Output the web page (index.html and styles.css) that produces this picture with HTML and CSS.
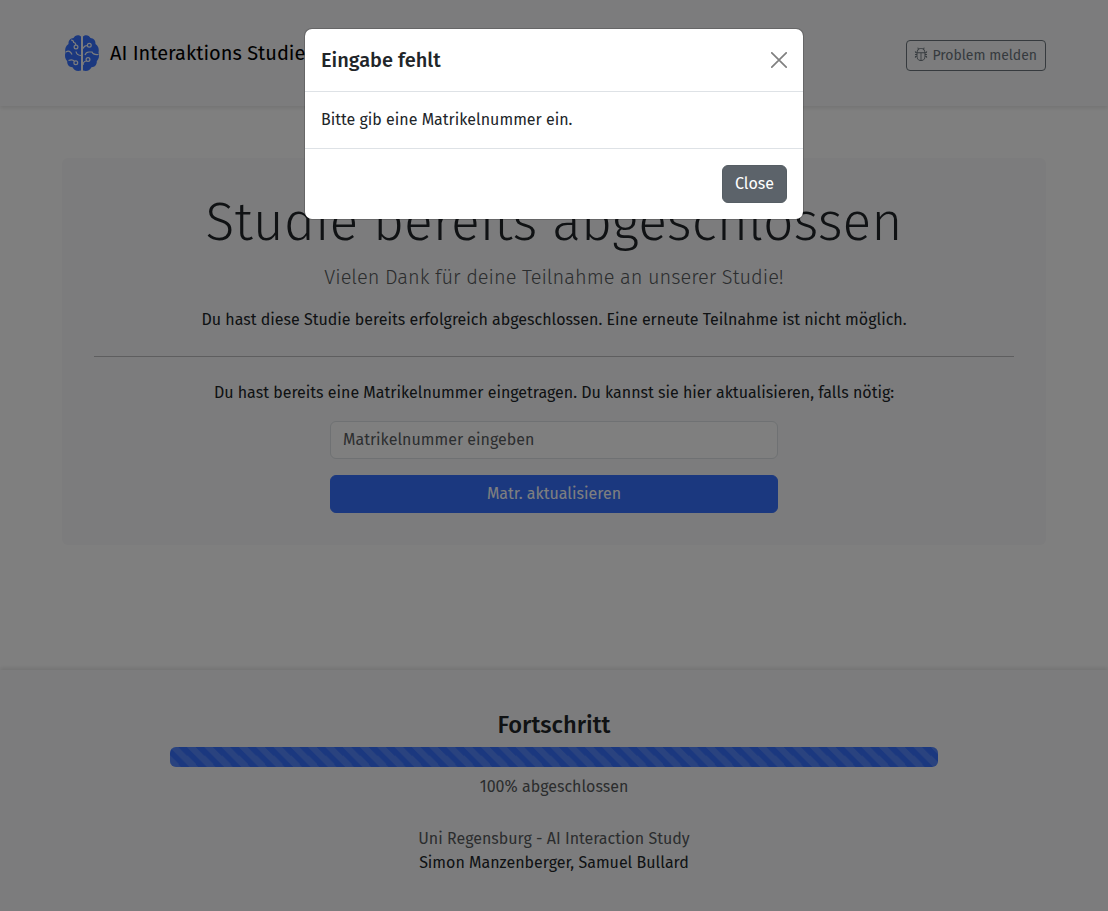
FILE: index.html
```html
<!DOCTYPE html>
<html lang="de">
<head>
<meta charset="utf-8">
<title>AI Interaktions Studie</title>
<link rel="stylesheet" href="styles.css">
</head>
<body>
<div class="page">
  <header class="site-header">
    <a class="brand">
      <svg class="brand-logo" viewBox="0 0 36 38" width="36" height="38">
        <path class="lobe" d="M17 2.500v34c-4 1.200-7-.2-8.500-3.300-3.500-.2-5.500-2.700-5.300-6C1 25 .4 21.500 1.500 18.500.5 15 2 11.500 4.500 10 4.300 6.500 6.500 4.200 9.500 4c1.200-2.800 5-4 7.500-1.500zM19 2.500v34c4 1.200 7-.2 8.500-3.300 3.500-.2 5.500-2.700 5.300-6 2.200-2.200 2.800-5.700 1.700-8.700 1-3.500-.5-7-3-8.500.2-3.500-2-5.800-5-6-1.200-2.800-5-4-7.500-1.500z"/>
        <g class="trace">
          <path d="M7 6q2.500 0 2.700 2.500 2 0 2 2.500M1.800 18q4-2.500 6.200 2.500M12 17.500q.5 3.700 5 4M4.500 26.500q4-1.500 5.800.7M19 14.500q1-3 4.500-3M19 31q0-3.500 3.500-4M21 21q1-3 4-3h3q1 3 6.500 2.500"/>
          <circle cx="12" cy="13" r="1.900"/><circle cx="11.800" cy="28.700" r="1.900"/>
          <circle cx="25.300" cy="11.300" r="1.900"/><circle cx="24" cy="25.500" r="1.900"/>
        </g>
      </svg>
      <span class="brand-name">AI Interaktions Studie</span>
    </a>
    <button class="btn btn-report">
      <svg class="bug" viewBox="0 0 16 16" width="14" height="14"><path d="M4.355.522a.5.5 0 0 1 .623.333l.291.956A5 5 0 0 1 8 1c1.007 0 1.946.298 2.731.811l.29-.956a.5.5 0 1 1 .957.290l-.410 1.352A5 5 0 0 1 13 6h.5a.5.5 0 0 0 .5-.5V5a.5.5 0 0 1 1 0v.5A1.500 1.500 0 0 1 13.500 7H13v1h1.500a.5.5 0 0 1 0 1H13v1h.5a1.500 1.500 0 0 1 1.500 1.500v.5a.5.5 0 1 1-1 0v-.5a.5.5 0 0 0-.5-.5H13a5 5 0 0 1-10 0h-.5a.5.5 0 0 0-.5.5v.5a.5.5 0 1 1-1 0v-.5A1.500 1.500 0 0 1 2.500 10H3V9H1.500a.5.5 0 0 1 0-1H3V7h-.5A1.500 1.500 0 0 1 1 5.500V5a.5.5 0 0 1 1 0v.5a.5.5 0 0 0 .5.5H3c0-1.364.547-2.601 1.432-3.503l-.410-1.352a.5.5 0 0 1 .333-.623M4 7v4a4 4 0 0 0 3.500 3.970V7zm4.500 0v7.970A4 4 0 0 0 12 11V7zM12 6a4 4 0 0 0-1.334-2.982A3.980 3.980 0 0 0 8 2a3.980 3.980 0 0 0-2.667 1.018A4 4 0 0 0 4 6z"/></svg>
      <span class="report-label">Problem melden</span>
    </button>
  </header>
  <main class="content">
    <section class="card">
      <h1 class="headline">Studie bereits abgeschlossen</h1>
      <p class="lead">Vielen Dank für deine Teilnahme an unserer Studie!</p>
      <p class="info">Du hast diese Studie bereits erfolgreich abgeschlossen. Eine erneute Teilnahme ist nicht möglich.</p>
      <hr class="divider">
      <p class="info">Du hast bereits eine Matrikelnummer eingetragen. Du kannst sie hier aktualisieren, falls nötig:</p>
      <form class="matr-form">
        <input class="field" type="text" placeholder="Matrikelnummer eingeben">
        <button class="btn btn-update" type="button">Matr. aktualisieren</button>
      </form>
    </section>
  </main>
  <footer class="site-footer">
    <h4 class="progress-title">Fortschritt</h4>
    <div class="progress"><div class="progress-bar" style="width:100%"></div></div>
    <p class="progress-note">100% abgeschlossen</p>
    <p class="org">Uni Regensburg - AI Interaction Study</p>
    <p class="authors">Simon Manzenberger, Samuel Bullard</p>
  </footer>
</div>
<div class="backdrop">
  <div class="modal">
    <div class="modal-header">
      <h5 class="modal-title">Eingabe fehlt</h5>
      <svg class="modal-x" viewBox="0 0 16 16" width="16" height="16"><path d="M.8.8l14.400 14.400M15.200.8L.8 15.200"/></svg>
    </div>
    <div class="modal-body">Bitte gib eine Matrikelnummer ein.</div>
    <div class="modal-footer"><button class="btn btn-close">Close</button></div>
  </div>
</div>
</body>
</html>
```
FILE: styles.css
```css
* { box-sizing: border-box; }
body { margin: 0; font: 400 16px/1.5 "Fira Sans", "Noto Sans", sans-serif; color: #212529; background: #fff; overflow: hidden; }
h1, h4, h5, p { margin: 0; }
.page { display: flex; flex-direction: column; height: 911px; }
.btn { font: inherit; border: 1px solid; border-radius: 6px; padding: 6px 12px; white-space: nowrap; }
.site-header { height: 106px; flex: none; padding: 0 62px; display: flex; justify-content: space-between; align-items: flex-start; background: #f8f9fa; box-shadow: 0 2px 4px rgba(0,0,0,.1); }
.brand { display: flex; gap: 10px; padding: 34px 0 0 2px; color: #000; }
.brand-logo { overflow: visible; }
.lobe { fill: #3771ff; }
.trace { fill: none; stroke: #f8f9fa; stroke-width: 1.2; }
.brand-name { font-size: 20px; line-height: 38px; white-space: nowrap; }
.btn-report { margin-top: 40px; width: 140px; height: 31px; padding: 0 8px; border-color: #6c757d; border-radius: 4px; background: transparent; color: #6c757d; font-size: 14px; line-height: 29px; display: flex; align-items: center; gap: 4px; }
.bug { fill: currentColor; flex: none; margin: -3px 0 0 -1px; }
.report-label { margin-left: .5px; }
.content { flex: none; padding: 52px 62px 0; height: 564px; }
.card { height: 387px; padding: 32px; background: #f8f9fa; border-radius: 6px; text-align: center; white-space: nowrap; }
.headline { font-size: 53.500px; font-weight: 300; line-height: 64.200px; margin-bottom: 8px; }
.lead { font-size: 20px; font-weight: 300; line-height: 30px; color: #575a5d; margin-bottom: 16px; }
.divider { margin: 24px 0; border: 0; border-top: 1px solid #bcbdbf; }
.matr-form { width: 448px; margin: 16px auto 0; display: flex; flex-direction: column; gap: 16px; }
.field { font: inherit; height: 38px; padding: 5px 12px 7px; border: 1px solid #dee2e6; border-radius: 6px; background: #fff; }
.field::placeholder { color: #595c5f; opacity: 1; }
.btn-update { height: 38px; color: #fff; background: #3771ff; border-color: #3771ff; }
.site-footer { height: 241px; flex: none; padding: 40.500px 170px 0; background: #f8f9fa; box-shadow: 0 -2px 4px rgba(0,0,0,.1); text-align: center; }
.progress-title { font-size: 23.700px; font-weight: 500; line-height: 28.500px; margin-bottom: 8px; }
.progress { height: 20px; border-radius: 6px; overflow: hidden; }
.progress-bar { height: 100%; background: linear-gradient(45deg, rgba(255,255,255,.15) 25%, transparent 25%, transparent 50%, rgba(255,255,255,.15) 50%, rgba(255,255,255,.15) 75%, transparent 75%) 0 0 / 17.300px 17.300px #3771ff; }
.progress-note { margin-top: 8px; color: #575a5d; }
.org { margin-top: 28px; color: #575a5d; }
.backdrop { position: absolute; inset: 0; background: rgba(0,0,0,.5); padding-top: 28px; }
.modal { width: 500px; height: 192px; margin: 0 auto; background: #fff; background-clip: padding-box; border: 1px solid rgba(0,0,0,.175); border-radius: 8px; }
.modal-header { height: 63px; padding: 0 16px; display: flex; align-items: center; justify-content: space-between; border-bottom: 1px solid #dee2e6; }
.modal-title { font-size: 20px; font-weight: 500; line-height: 30px; }
.modal-x { fill: none; stroke: #808080; stroke-width: 1.700; stroke-linecap: round; }
.modal-body { height: 57px; padding: 16px; border-bottom: 1px solid #dee2e6; }
.modal-footer { padding: 16px; display: flex; justify-content: flex-end; }
.btn-close { width: 65px; height: 38px; padding: 0; color: #fff; background: #5c636a; border-color: #565e64; }
```
